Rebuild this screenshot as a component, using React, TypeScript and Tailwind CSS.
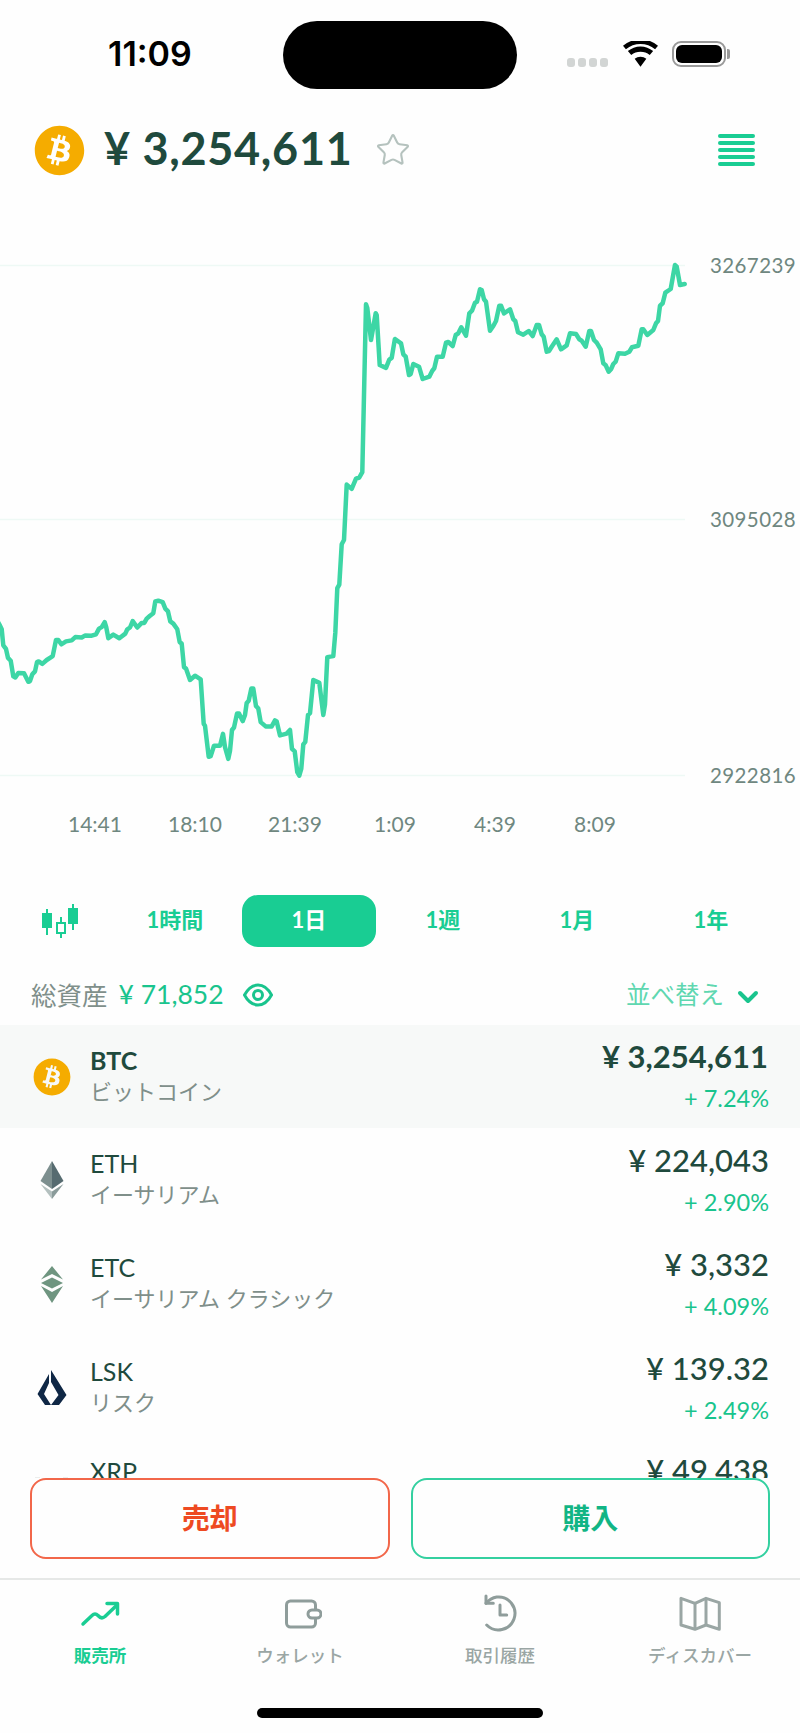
import React from 'react';
import { ChevronDown, Star } from 'lucide-react';
import { FaBitcoin } from 'react-icons/fa';

// traced from the reference: left part has x scale 3, y scale 2.8 from (0,240)
const leftTrace: [number, number][] = [
    [-6, 1070], [0, 1080], [5, 1090], [10, 1135], [18, 1145], [24, 1170], [32, 1178], [40, 1222], [46, 1225], [55, 1212], [72, 1213], [85, 1237], [90, 1235], [97, 1216], [105, 1208], [111, 1182], [116, 1180], [127, 1187], [140, 1176], [158, 1165], [168, 1120], [175, 1120], [184, 1132], [198, 1124], [215, 1121], [226, 1112], [245, 1113], [256, 1107], [275, 1108], [288, 1104], [297, 1088], [305, 1084], [314, 1070], [319, 1085], [325, 1115], [340, 1105], [358, 1115], [376, 1102], [382, 1090], [390, 1085], [398, 1067], [412, 1085], [425, 1072], [433, 1072], [440, 1060], [450, 1052], [460, 1045], [466, 1012], [475, 1010], [488, 1014], [496, 1032], [504, 1040], [511, 1068], [520, 1074], [532, 1090], [539, 1126], [545, 1130], [552, 1196], [558, 1200], [570, 1232], [585, 1220], [602, 1230], [611, 1355], [615, 1360], [626, 1447], [632, 1445], [642, 1416], [660, 1416], [669, 1383], [675, 1420], [685, 1453], [690, 1430], [696, 1372], [702, 1365], [711, 1326], [717, 1326], [728, 1347], [735, 1330], [740, 1296], [746, 1290], [754, 1256], [760, 1256], [768, 1305], [775, 1312], [782, 1350], [797, 1362], [815, 1362], [825, 1345], [830, 1348], [840, 1387], [860, 1382], [870, 1372], [876, 1425], [884, 1432], [892, 1490], [898, 1500], [904, 1480], [910, 1412], [916, 1405], [924, 1330], [930, 1325], [940, 1232], [958, 1240], [970, 1330], [975, 1300], [982, 1168], [1000, 1165], [1006, 1100], [1012, 975], [1018, 965], [1025, 852], [1032, 840], [1040, 685], [1055, 697], [1068, 668], [1078, 665], [1087, 650], [1098, 180], [1102, 190], [1113, 280], [1127, 205], [1130, 210], [1139, 350], [1158, 358], [1168, 335], [1175, 330], [1184, 280],
];

// right part: 3x from (340,240)
const rightTrace: [number, number][] = [
    [165, 297], [183, 310], [190, 343], [197, 350], [207, 405], [212, 402], [220, 372], [237, 380], [248, 417], [268, 410], [277, 392], [283, 385], [291, 350], [308, 350], [318, 308], [325, 306], [338, 318], [347, 285], [355, 280], [364, 262], [378, 287], [388, 220], [396, 212], [405, 188], [411, 185], [420, 148], [425, 150], [432, 178], [438, 185], [450, 272], [460, 258], [468, 243], [478, 197], [483, 197], [492, 220], [510, 208], [520, 238], [526, 243], [534, 277], [550, 284], [566, 273], [578, 288], [590, 255], [597, 255], [605, 283], [611, 290], [620, 335], [627, 333], [635, 320], [650, 298], [663, 328], [680, 316], [690, 280], [708, 282], [718, 298], [725, 302], [737, 320], [748, 273], [753, 273], [762, 300], [770, 308], [782, 328], [790, 370], [797, 376], [806, 395], [813, 388], [820, 372], [827, 365], [835, 340], [855, 341], [868, 335], [876, 322], [895, 317], [905, 268], [910, 268], [922, 285], [940, 270], [948, 250], [954, 243], [960, 197], [968, 190], [976, 158], [992, 147], [1005, 75], [1010, 80], [1020, 135], [1034, 132],
];

const chartPoints = [
    ...leftTrace.map(([x, y]) => `${(x / 3).toFixed(1)},${(240 + y / 2.8 - 200).toFixed(1)}`),
    ...rightTrace.map(([x, y]) => `${(340 + x / 3).toFixed(1)},${(240 + y / 3 - 200).toFixed(1)}`),
].join(' ');

const coins = [
    { symbol: 'ETH', name: 'イーサリアム', price: '¥ 224,043', change: '+ 2.90%', icon: <EthIcon /> },
    { symbol: 'ETC', name: 'イーサリアム クラシック', price: '¥ 3,332', change: '+ 4.09%', icon: <EtcIcon /> },
    { symbol: 'LSK', name: 'リスク', price: '¥ 139.32', change: '+ 2.49%', icon: <LskIcon /> },
];

function EthIcon() {
    return (
        <svg width="24" height="38" viewBox="0 0 24 38">
            <polygon points="12,0 0.500,20 12,28 12,0" fill="#7d8f8f" />
            <polygon points="12,0 23.500,20 12,28" fill="#566b70" />
            <polygon points="0.500,23 12,30.500 12,38" fill="#b4c0bf" />
            <polygon points="23.500,23 12,30.500 12,38" fill="#8a9b9a" />
        </svg>
    );
}

function EtcIcon() {
    return (
        <svg width="24" height="37" viewBox="0 0 24 37">
            <polygon points="12,0 1,13.500 12,8 23,13.500" fill="#6f9580" />
            <polygon points="1,17 12,11.500 23,17 12,22.500" fill="#6f9580" />
            <polygon points="1,20 12,26 23,20 12,37" fill="#6f9580" />
        </svg>
    );
}

function LskIcon() {
    return (
        <svg width="30" height="36" viewBox="0 0 30 36">
            <path d="M12 4 V13 L7 24 L14 35 H8 L0.500 24 Z" fill="#0f2745" />
            <path d="M14 0 L29.500 25 L22 35 H14 L21.500 25 L14 12 Z" fill="#0f2745" />
        </svg>
    );
}

function CandleIcon() {
    return (
        <svg width="38" height="34" viewBox="0 0 38 34" fill="none" stroke="#19cd93" strokeWidth="2">
            <path d="M6 5v26M20 13v21M32 0v26" />
            <rect x="2" y="10" width="8" height="13" fill="#19cd93" />
            <rect x="16" y="19" width="8" height="10" fill="white" />
            <rect x="28" y="5" width="8" height="14" fill="#19cd93" />
        </svg>
    );
}

function TrendIcon() {
    return (
        <svg width="44" height="44" viewBox="0 0 44 44" fill="none" stroke="#19cd93" strokeWidth="3.500" strokeLinecap="round" strokeLinejoin="round">
            <path d="M5 33 L14 24.500 Q17 21.500 20 24.500 Q23.500 28.500 27 25.500 L39 14" />
            <path d="M29 12.500 H39.500 V23" />
        </svg>
    );
}

function WalletIcon() {
    return (
        <svg width="44" height="44" viewBox="0 0 44 44" fill="none" stroke="#8f9d9b" strokeWidth="3">
            <path d="M37.500 19 V14 a4 4 0 0 0-4-4 H12.500 a4 4 0 0 0-4 4 V32 a4 4 0 0 0 4 4 H33.500 a4 4 0 0 0 4-4 V27" />
            <rect x="30" y="19" width="13" height="8" rx="4" fill="white" />
        </svg>
    );
}

function HistoryIcon() {
    return (
        <svg width="44" height="44" viewBox="0 0 44 44" fill="none" stroke="#8f9d9b" strokeWidth="3" strokeLinecap="round" strokeLinejoin="round">
            <path d="M8.700 34 A16.500 16.500 0 1 0 18.700 6 Q12.500 7 8 12.300" />
            <path d="M8 5 V12.300 H15.300" />
            <path d="M22 14 V24 H28.700" />
        </svg>
    );
}

function DiscoverIcon() {
    return (
        <svg width="44" height="44" viewBox="0 0 44 44" fill="none" stroke="#9aa6a4" strokeWidth="3" strokeLinejoin="round">
            <path d="M3 7.300 L17 12.300 L28 7.300 L41.300 11.700 V38.300 L28 34 L17 38.300 L3 34 Z" />
            <path d="M17 12.300 V38.300 M28 7.300 V34" />
        </svg>
    );
}

const App: React.FC = () => {
    return (
        <div className="h-[1733px] w-[800px] flex flex-col overflow-hidden relative bg-[#fefefe] text-[#1f4a3d] font-[family-name:Lato,'Noto_Sans_CJK_JP',sans-serif]">
            {/* status bar */}
            <div className="h-[100px] shrink-0 flex items-start pt-[21px]">
                <span className="w-[283px] pl-[108px] pt-[13px] text-[34px] leading-[40px] font-semibold text-black font-[family-name:Inter,sans-serif]">11:09</span>
                <div className="w-[234px] h-[68px] rounded-[34px] bg-black" />
                <div className="flex items-start pl-[50px] pt-[20px]">
                    <div className="flex gap-[3px] mt-[17px]">
                        <span className="w-[8px] h-[9px] rounded-[3px] bg-[#d2d5d4]" />
                        <span className="w-[8px] h-[9px] rounded-[3px] bg-[#d2d5d4]" />
                        <span className="w-[8px] h-[9px] rounded-[3px] bg-[#d2d5d4]" />
                        <span className="w-[8px] h-[9px] rounded-[3px] bg-[#d2d5d4]" />
                    </div>
                    <svg width="35" height="26" viewBox="0 0 36 26" className="ml-[15px]">
                        <path d="M18 26l-6-8a9 9 0 0 1 12 0zM8.500 14L5 10a20 20 0 0 1 26 0l-3.500 4a15 15 0 0 0-19 0zM3 8L0 4.500a28 28 0 0 1 36 0L33 8a24 24 0 0 0-30 0z" fill="black" />
                    </svg>
                    <div className="ml-[14px] w-[54px] h-[26px] rounded-[9px] border-2 border-[#9a9a9a] p-[2px]">
                        <div className="w-full h-full rounded-[6px] bg-black" />
                    </div>
                    <span className="ml-[1px] mt-[8px] w-[3px] h-[10px] rounded-r-[2px] bg-[#9a9a9a]" />
                </div>
            </div>

            {/* price header */}
            <div className="h-[100px] shrink-0 flex items-center pl-[34px] pr-[45px]">
                <FaBitcoin className="w-[51px] h-[51px] text-[#f5ac00]" />
                <h1 className="ml-[19px] -mt-[3px] text-[45px] font-bold tracking-[0.7px] leading-none">¥ 3,254,611</h1>
                <Star className="ml-[22px] w-[36px] h-[36px] text-[#b5c2be]" strokeWidth={1.4} />
                <div className="ml-auto w-[37px] flex flex-col gap-[3px]">
                    <span className="h-[4px] rounded-full bg-[#19cd93]" />
                    <span className="h-[4px] rounded-full bg-[#19cd93]" />
                    <span className="h-[4px] rounded-full bg-[#19cd93]" />
                    <span className="h-[4px] rounded-full bg-[#19cd93]" />
                    <span className="h-[4px] rounded-full bg-[#19cd93]" />
                </div>
            </div>

            {/* chart */}
            <div className="h-[606px] shrink-0 relative">
                <svg width="800" height="606" viewBox="0 0 800 606" className="block">
                    <path d="M0 65.500H685M0 319.500H685M0 575.500H685" stroke="#eef9f5" strokeWidth="1.500" />
                    <polyline points={chartPoints} fill="none" stroke="#3dd6a5" strokeWidth="4.500" strokeLinejoin="round" strokeLinecap="round" />
                </svg>
                <span className="absolute left-[710px] top-[52px] text-[20.500px] leading-[26px] tracking-[0.4px] text-[#6f8780]">3267239</span>
                <span className="absolute left-[710px] top-[306px] text-[20.500px] leading-[26px] tracking-[0.4px] text-[#6f8780]">3095028</span>
                <span className="absolute left-[710px] top-[562px] text-[20.500px] leading-[26px] tracking-[0.4px] text-[#6f8780]">2922816</span>
            </div>

            {/* time axis */}
            <div className="h-[36px] shrink-0 flex items-center pl-[45px] text-[21px] text-[#6f8780]">
                <span className="w-[100px] text-center">14:41</span>
                <span className="w-[100px] text-center">18:10</span>
                <span className="w-[100px] text-center">21:39</span>
                <span className="w-[100px] text-center">1:09</span>
                <span className="w-[100px] text-center">4:39</span>
                <span className="w-[100px] text-center">8:09</span>
            </div>

            {/* range tabs */}
            <div className="mt-[53px] h-[52px] shrink-0 flex items-center text-[22px] font-bold text-[#19cd93]">
                <div className="w-[108px] pl-[41px]"><CandleIcon /></div>
                <span className="w-[134px] pb-[3px] text-center">1時間</span>
                <span className="w-[134px] h-[52px] pb-[3px] rounded-[16px] bg-[#19cd93] text-white flex items-center justify-center">1日</span>
                <span className="w-[134px] pb-[3px] text-center">1週</span>
                <span className="w-[134px] pb-[3px] text-center">1月</span>
                <span className="w-[134px] pb-[3px] text-center">1年</span>
            </div>

            {/* totals */}
            <div className="mt-[22px] h-[56px] pb-[4px] shrink-0 flex items-center pl-[31px] pr-[36px]">
                <span className="text-[25.500px] text-[#7f8f8a]">総資産</span>
                <span className="ml-[11px] text-[26.500px] text-[#19c48d]">¥ 71,852</span>
                <svg width="30" height="24" viewBox="0 0 30 24" fill="none" stroke="#19c48d" strokeWidth="3" className="ml-[19px]">
                    <path d="M1.500 12C5 5.500 9.500 2 15 2s10 3.500 13.500 10C25 18.500 20.500 22 15 22S5 18.500 1.500 12z" />
                    <circle cx="15" cy="12" r="4.500" />
                </svg>
                <span className="ml-auto text-[24.500px] text-[#5fd7b0]">並べ替え</span>
                <ChevronDown className="ml-[8px] mt-[3px] w-[32px] h-[32px] text-[#19c48d]" strokeWidth={3} />
            </div>

            {/* coin list */}
            <div className="flex-1 min-h-0 overflow-hidden">
                <div className="h-[103px] bg-[#f7f9f8] pr-[32px] flex items-center">
                    <div className="w-[38px] ml-[33px] mr-[19px] flex justify-center"><FaBitcoin className="w-[38px] h-[38px] shrink-0 text-[#f5ac00]" /></div>
                    <div className="pb-[2px]">
                        <div className="text-[25px] leading-[32px] font-bold">BTC</div>
                        <div className="text-[22px] leading-[32px] text-[#7f8f8a]">ビットコイン</div>
                    </div>
                    <div className="ml-auto text-right">
                        <div className="text-[31px] leading-[34px] font-bold">¥ 3,254,611</div>
                        <div className="mt-[8px] mr-[-1px] text-[23.500px] leading-[34px] text-[#19c48d]">+ 7.24%</div>
                    </div>
                </div>
                {coins.map((coin) => (
                    <div key={coin.symbol} className="h-[104px] pr-[31px] flex items-center">
                        <div className="w-[38px] ml-[33px] mr-[19px] flex justify-center">{coin.icon}</div>
                        <div className="pb-[2px]">
                            <div className="text-[25px] leading-[32px]">{coin.symbol}</div>
                            <div className="text-[22px] leading-[32px] text-[#7f8f8a]">{coin.name}</div>
                        </div>
                        <div className="ml-auto text-right">
                            <div className="text-[31px] leading-[36px] font-medium">{coin.price}</div>
                            <div className="mt-[7px] text-[23.500px] leading-[34px] text-[#19c48d]">{coin.change}</div>
                        </div>
                    </div>
                ))}
                <div className="h-[103px] pr-[31px] flex items-start">
                    <svg width="38" height="39" viewBox="0 0 38 39" className="ml-[33px] mr-[19px]" stroke="#b8bfbd" strokeWidth="1.500">
                        <path d="M2 38.500h5M30 38.500h5" />
                    </svg>
                    <div className="mt-[15px] text-[25px] leading-[32px]">XRP</div>
                    <div className="ml-auto mt-[13px] text-[31px] leading-[34px] font-medium">¥ 49,438</div>
                </div>
            </div>

            {/* trade buttons */}
            <div className="h-[100px] shrink-0 flex gap-[21px] px-[30px] items-start bg-[#fefefe]">
                <button className="flex-1 h-[81px] pb-[2px] rounded-[16px] border-2 border-[#f2674a] text-[#ee4a22] text-[28px] font-bold">売却</button>
                <button className="flex-1 h-[81px] pb-[2px] rounded-[16px] border-2 border-[#34d0a0] text-[#12b585] text-[28px] font-bold">購入</button>
            </div>

            {/* bottom nav */}
            <div className="h-[155px] shrink-0 border-t-2 border-[#e6e8e7] flex flex-col">
                <div className="flex pt-[11px] text-[17.500px] leading-[25px] text-[#9aa6a4]">
                    <div className="w-[200px] flex flex-col items-center gap-[8px] text-[#19cd93]">
                        <TrendIcon />
                        <span className="font-semibold">販売所</span>
                    </div>
                    <div className="w-[200px] flex flex-col items-center gap-[8px]">
                        <WalletIcon />
                        <span className="font-medium">ウォレット</span>
                    </div>
                    <div className="w-[200px] flex flex-col items-center gap-[8px]">
                        <HistoryIcon />
                        <span className="font-medium">取引履歴</span>
                    </div>
                    <div className="w-[200px] flex flex-col items-center gap-[8px]">
                        <DiscoverIcon />
                        <span className="font-medium">ディスカバー</span>
                    </div>
                </div>
                <div className="mt-auto mb-[15px] mx-auto w-[286px] h-[10px] rounded-full bg-black" />
            </div>
        </div>
    );
};

export default App;
